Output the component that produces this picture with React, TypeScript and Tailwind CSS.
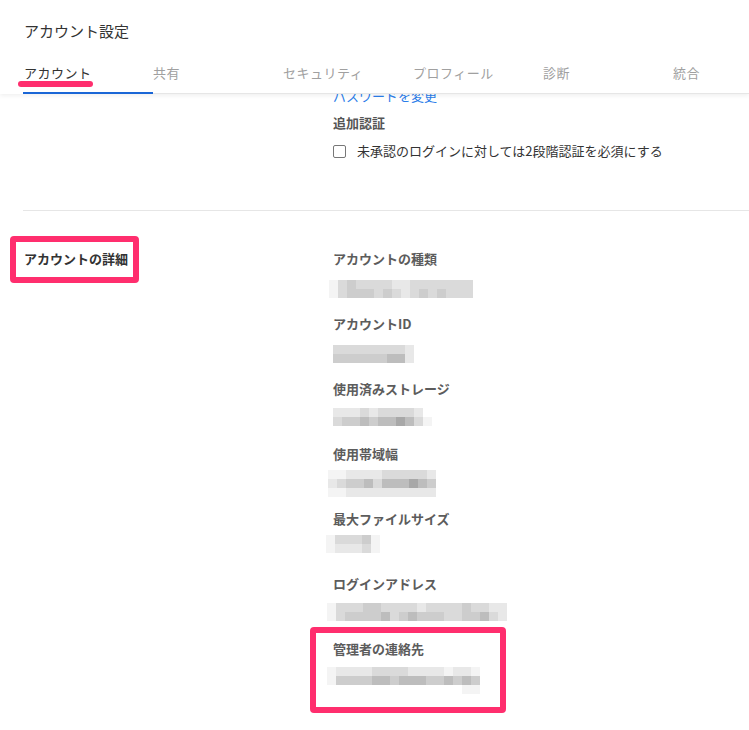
import React from 'react';

const shade: Record<string, string> = {
  '0': 'bg-transparent',
  '1': 'bg-[#f4f4f4]',
  '2': 'bg-[#e8e8e8]',
  '3': 'bg-[#dadada]',
  '4': 'bg-[#cdcdcd]',
  '5': 'bg-[#bdbdbd]',
  '6': 'bg-[#a8a8a8]',
};

// Pixelated (blurred) values
function Mosaic({ rows }: { rows: string[] }) {
  return (
    <div className="flex flex-col">
      {rows.map((row, i) => (
        <div key={i} className="flex">
          {row.split('').map((c, j) => (
            <div key={j} className={`w-[9px] h-[9px] ${shade[c]}`} />
          ))}
        </div>
      ))}
    </div>
  );
}

const tabs = ['アカウント', '共有', 'セキュリティ', 'プロフィール', '診断', '統合'];

const details = [
  { label: 'アカウントの種類', pad: 'mt-[12px] -ml-[4px]', rows: ['1343333223333333', '1344434323434333'] },
  { label: 'アカウントID', pad: 'mt-[12px]', rows: ['333333332', '444444552'] },
  { label: '使用済みストレージ', pad: 'mt-[10px]', rows: ['222323333200', '344545565310'] },
  { label: '使用帯域幅', pad: 'mt-[7px] -ml-[5px]', rows: ['112222333332', '234453555654', '112222222222'] },
  { label: '最大ファイルサイズ', pad: 'mt-[7px] -ml-[7px]', rows: ['133341', '122231'] },
  { label: 'ログインアドレス', pad: 'mt-[10px] -ml-[6px]', rows: ['13334433332333343322', '13444453454443344532'] },
  { label: '管理者の連絡先', pad: 'mt-[9px] -ml-[6px]', rows: ['12222333322221221', '14444554555445454', '00000000000000011'] },
];

export default function App() {
  return (
    <div
      className="relative w-[749px] h-[730px] overflow-hidden bg-white text-[#333]"
      style={{ fontFamily: '"Noto Sans CJK JP", "Noto Sans", sans-serif' }}
    >
      {/* Header */}
      <div className="relative z-10 bg-white shadow-[0_2px_4px_rgba(0,0,0,0.06)]">
        <div className="px-6 pt-[21px]">
          <h1 className="text-[15px] leading-[20px] text-[#333]">アカウント設定</h1>
        </div>
        <div className="ml-[23px] mt-[17px] flex border-b border-[#e6e6e6]">
          {tabs.map((t, i) => (
            <div key={t} className="relative shrink-0 w-[130px] h-[35px] pt-[5px] text-[13px] leading-[20px] tracking-[0.5px]">
              <span className={i === 0 ? 'pl-[1px] text-[#333]' : 'text-[#a0a0a0]'}>{t}</span>
              {i === 0 && <div className="absolute left-0 right-0 -bottom-[1px] h-[2px] bg-[#1a66d6]" />}
            </div>
          ))}
        </div>
      </div>

      {/* Content */}
      <div className="relative -mt-[7px] ml-[23px]">
        <div className="flex">
          <div className="w-[310px]" />
          <div className="flex flex-col text-[13px] leading-[18px]">
            <a className="text-[#2b7de9]">パスワードを変更</a>
            <div className="mt-[9px] font-bold text-[#555]">追加認証</div>
            <label className="mt-[10px] flex items-center">
              <span className="w-[13px] h-[13px] border border-[#777] rounded-[2px] bg-white" />
              <span className="ml-[11px] text-[#333]">未承認のログインに対しては2段階認証を必須にする</span>
            </label>
          </div>
        </div>

        <div className="mt-[50px] border-t border-[#e6e6e6]" />

        <div className="flex pt-[39px]">
          <div className="w-[310px] pl-[1px] text-[13px] leading-[18px] font-bold text-[#333]">アカウントの詳細</div>
          <div className="flex flex-col">
            {details.map((d) => (
              <div key={d.label} className="h-[65px]">
                <div className="text-[13px] leading-[18px] font-bold text-[#5c5c5c]">{d.label}</div>
                <div className={d.pad}>
                  <Mosaic rows={d.rows} />
                </div>
              </div>
            ))}
          </div>
        </div>
      </div>

      {/* Annotations */}
      <div className="absolute left-[18px] top-[81px] w-[75px] h-[6px] rounded-full bg-[#ff2e6e] z-20" />
      <div className="absolute left-[10px] top-[236px] w-[129px] h-[47px] border-[6px] border-[#ff2e6e] rounded-[4px] z-20" />
      <div className="absolute left-[310px] top-[627px] w-[196px] h-[86px] border-[6px] border-[#ff2e6e] rounded-[4px] z-20" />
    </div>
  );
}
